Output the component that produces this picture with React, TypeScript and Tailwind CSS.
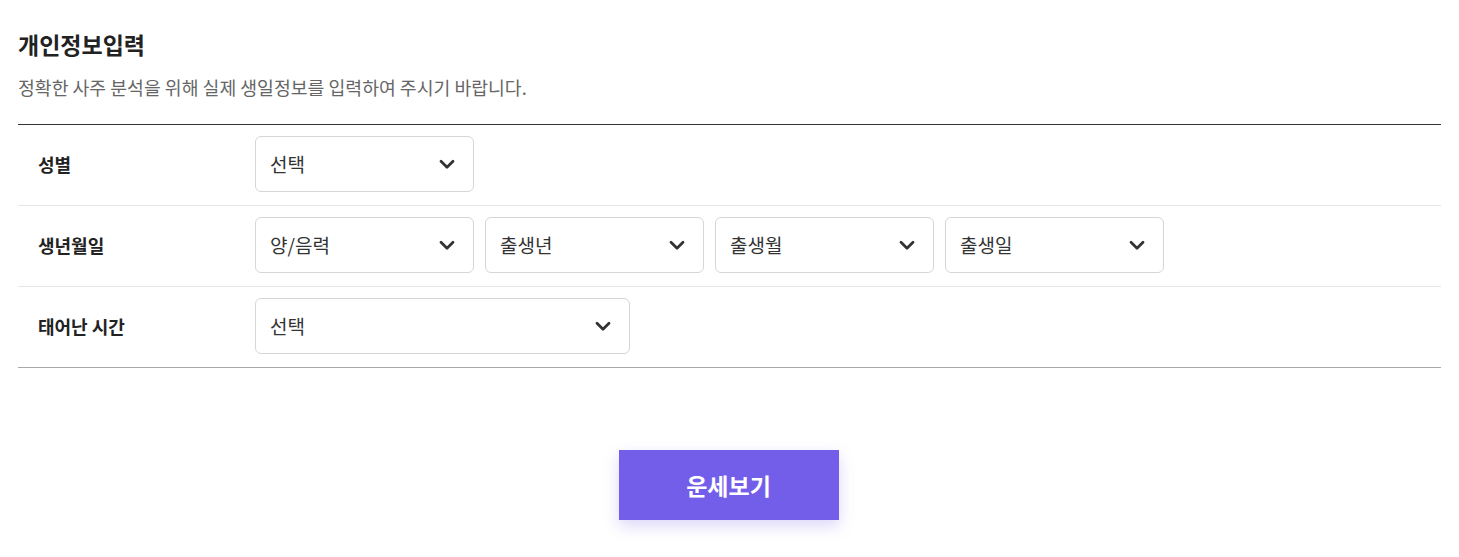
type SelectBoxProps = {
    label: string;
    width: string;
};

const Chevron = () => (
    <svg width="16" height="11" viewBox="0 0 16 11" fill="none">
        <path
            d="M2 2.2 L8 8.2 L14 2.2"
            stroke="#333"
            strokeWidth="2.8"
            strokeLinecap="round"
            strokeLinejoin="round"
        />
    </svg>
);

const SelectBox = (props: SelectBoxProps) => {
    return (
        <div
            className={`${props.width} h-[56px] flex items-center justify-between border border-[#d6d6d6] rounded-md bg-white pl-[14px] pr-[18px]`}
        >
            <span className="text-[19px] text-[#333]">{props.label}</span>
            <Chevron />
        </div>
    );
};

const rows = [
    { title: "성별", selects: [{ label: "선택", width: "w-[219px]" }] },
    {
        title: "생년월일",
        selects: [
            { label: "양/음력", width: "w-[219px]" },
            { label: "출생년", width: "w-[219px]" },
            { label: "출생월", width: "w-[219px]" },
            { label: "출생일", width: "w-[219px]" },
        ],
    },
    { title: "태어난 시간", selects: [{ label: "선택", width: "w-[375px]" }] },
];

export default function App() {
    return (
        <div
            className="w-full min-h-[557px] bg-white px-[18px] pt-[28px]"
            style={{ fontFamily: '"Noto Sans CJK KR", "Noto Sans", sans-serif' }}
        >
            <h2 className="text-[23px] font-bold text-[#222] leading-[32px]">
                개인정보입력
            </h2>
            <p className="mt-[14px] text-[18.3px] text-[#666] leading-[27px]">
                정확한 사주 분석을 위해 실제 생일정보를 입력하여 주시기 바랍니다.
            </p>
            <div className="mt-[23px] border-t border-[#333] border-b border-b-[#aaa]">
                {rows.map((row, i) => (
                    <div
                        key={row.title}
                        className={`flex items-center pt-[11px] pb-[13px] ${
                            i < rows.length - 1 ? "border-b border-[#e6e6e6]" : ""
                        }`}
                    >
                        <div className="w-[237px] pl-[20px] text-[18px] font-bold text-[#222]">
                            {row.title}
                        </div>
                        <div className="flex gap-[11px]">
                            {row.selects.map((s) => (
                                <SelectBox key={s.label} label={s.label} width={s.width} />
                            ))}
                        </div>
                    </div>
                ))}
            </div>
            <div className="flex justify-center mt-[82px] pr-[2px]">
                <button className="w-[220px] h-[70px] bg-[#735ee9] text-white text-[23px] font-bold shadow-[0_6px_14px_rgba(115,94,233,0.25)]">
                    운세보기
                </button>
            </div>
        </div>
    );
}
